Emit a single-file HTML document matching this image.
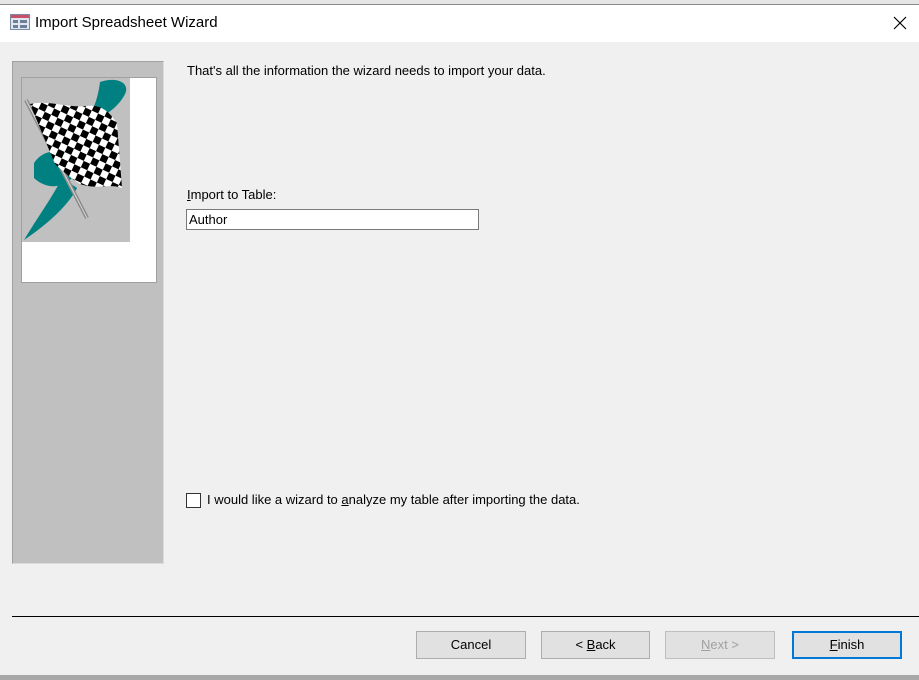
<!DOCTYPE html>
<html><head><style>
*{margin:0;padding:0;box-sizing:border-box}
body{width:919px;height:680px;background:#f0f0f0;font-family:"Liberation Sans",sans-serif;font-size:13px;color:#000;position:relative;overflow:hidden}
.abs{position:absolute}
.btn{position:absolute;top:631px;height:28px;background:#e1e1e1;border:1px solid #adadad;text-align:center;line-height:26px;font-size:13px}
</style></head><body>
<div class="abs" style="left:0;top:0;width:919px;height:5px;background:#e6e6e6;border-bottom:1px solid #888"></div>
<div class="abs" style="left:0;top:5px;width:919px;height:37px;background:#fff"></div>
<svg class="abs" style="left:10px;top:14px" width="20" height="16"><rect x="0.5" y="0.5" width="19" height="15" fill="#dfe6ef" stroke="#7a8aa0"/><rect x="1" y="1" width="18" height="3" fill="#c8506a"/><rect x="3" y="6" width="5" height="3" fill="#6c7e98"/><rect x="10" y="6" width="7" height="3" fill="#6c7e98"/><rect x="3" y="11" width="5" height="3" fill="#6c7e98"/><rect x="10" y="11" width="7" height="3" fill="#6c7e98"/></svg>
<div class="abs" style="left:35px;top:14px;font-size:15px;color:#000">Import Spreadsheet Wizard</div>
<svg class="abs" style="left:893px;top:16px" width="14" height="14"><path d="M1 1L13 13M13 1L1 13" stroke="#000" stroke-width="1.2"/></svg>

<div class="abs" style="left:12px;top:61px;width:152px;height:503px;background:#c0c0c0;border:1px solid #a0a0a0;border-right-color:#dcdcdc;border-bottom-color:#dcdcdc"></div>
<div class="abs" style="left:21px;top:77px;width:136px;height:206px;background:#fff;border:1px solid #a0a0a0"></div>
<svg class="abs" style="left:22px;top:78px" width="108" height="164">
<rect width="108" height="164" fill="#c0c0c0"/>
<path d="M78 4 C95 -2 110 5 102 18 C94 32 78 40 70 45 L66 40 C72 30 76 20 78 4Z" fill="#008080"/>
<path d="M12 85 C22 70 38 72 45 80 L50 100 C40 110 25 112 12 100Z" fill="#008080"/>
<path d="M40 100 L55 110 C45 130 20 150 2 162 C15 140 30 120 40 100Z" fill="#008080"/>
<line x1="4" y1="22" x2="65" y2="140" stroke="#8a8a8a" stroke-width="4"/>
<line x1="4" y1="22" x2="65" y2="140" stroke="#d8d8d8" stroke-width="1"/>
<defs><pattern id="c" width="14" height="14" patternUnits="userSpaceOnUse" patternTransform="rotate(25)"><rect width="14" height="14" fill="#fff"/><rect width="7" height="7" fill="#000"/><rect x="7" y="7" width="7" height="7" fill="#000"/></pattern></defs>
<path d="M8 26 C28 22 45 30 65 28 C80 26 88 35 95 45 L100 110 C88 105 75 112 58 106 C48 100 40 92 33 86 Z" fill="url(#c)"/>
</svg>

<div class="abs" style="left:187px;top:63px">That's all the information the wizard needs to import your data.</div>
<div class="abs" style="left:187px;top:187px"><u>I</u>mport to Table:</div>
<div class="abs" style="left:186px;top:209px;width:293px;height:21px;background:#fff;border:1px solid #7a7a7a;padding:2px 0 0 2px">Author</div>
<div class="abs" style="left:186px;top:493px;width:15px;height:15px;background:#fff;border:1px solid #333"></div>
<div class="abs" style="left:207px;top:492px">I would like a wizard to <u>a</u>nalyze my table after importing the data.</div>

<div class="abs" style="left:12px;top:616px;width:907px;height:1px;background:#000"></div>
<div class="btn" style="left:416px;width:110px">Cancel</div>
<div class="btn" style="left:541px;width:109px">&lt; <u>B</u>ack</div>
<div class="btn" style="left:665px;width:110px;color:#a0a0a0;border-color:#bfbfbf"><u>N</u>ext &gt;</div>
<div class="btn" style="left:792px;width:110px;border:2px solid #0078d7;line-height:24px"><u>F</u>inish</div>
<div class="abs" style="left:0;top:675px;width:919px;height:5px;background:#a8a8a8"></div>
</body></html>
